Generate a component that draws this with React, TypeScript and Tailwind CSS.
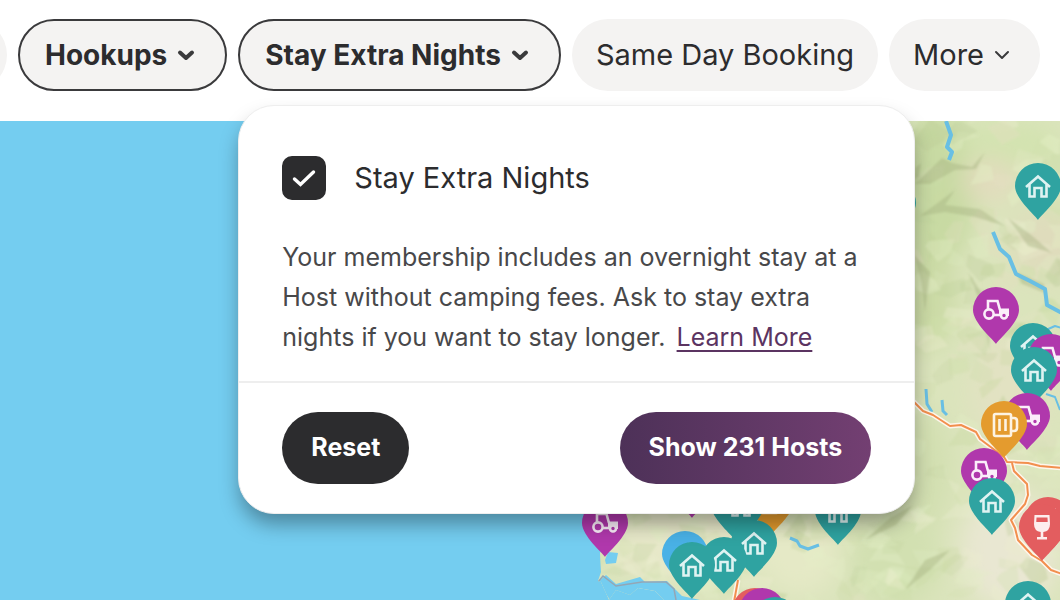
import React, { useState } from "react";

type Glyph = "house" | "tractor" | "beer" | "wine" | "ring";
type Pin = { x: number; y: number; color: string; glyph: Glyph };

const TEAL = "#2fa3a1";
const PURPLE = "#b038ac";
const ORANGE = "#e49b2e";
const RED = "#e35d5f";
const BLUE = "#49b1e6";

const pins: Pin[] = [
  { x: 1038, y: 186, color: TEAL, glyph: "house" },
  { x: 996, y: 310, color: PURPLE, glyph: "tractor" },
  { x: 1033, y: 346, color: TEAL, glyph: "house" },
  { x: 1051, y: 357, color: PURPLE, glyph: "tractor" },
  { x: 1034, y: 370, color: TEAL, glyph: "house" },
  { x: 1027, y: 416, color: PURPLE, glyph: "tractor" },
  { x: 1004, y: 424, color: ORANGE, glyph: "beer" },
  { x: 984, y: 471, color: PURPLE, glyph: "tractor" },
  { x: 992, y: 501, color: TEAL, glyph: "house" },
  { x: 1048, y: 520, color: RED, glyph: "wine" },
  { x: 1042, y: 527, color: RED, glyph: "wine" },
  { x: 1028, y: 604, color: TEAL, glyph: "house" },
  { x: 893, y: 203, color: TEAL, glyph: "house" },
  { x: 598, y: 490, color: TEAL, glyph: "house" },
  { x: 692, y: 484, color: PURPLE, glyph: "tractor" },
  { x: 605, y: 523, color: PURPLE, glyph: "tractor" },
  { x: 771, y: 501, color: ORANGE, glyph: "beer" },
  { x: 734, y: 505, color: TEAL, glyph: "house" },
  { x: 741, y: 505, color: TEAL, glyph: "house" },
  { x: 838, y: 511, color: TEAL, glyph: "house" },
  { x: 754, y: 543, color: TEAL, glyph: "house" },
  { x: 685, y: 554, color: BLUE, glyph: "ring" },
  { x: 724, y: 560, color: TEAL, glyph: "house" },
  { x: 692, y: 565, color: TEAL, glyph: "house" },
  { x: 755, y: 611, color: RED, glyph: "wine" },
  { x: 762, y: 611, color: PURPLE, glyph: "tractor" },
  { x: 775, y: 620, color: TEAL, glyph: "house" },
];

function PinGlyph({ glyph }: { glyph: Glyph }) {
  switch (glyph) {
    case "house":
      return (
        <g fill="none" stroke="#dff3f2" strokeWidth="2.6">
          <path d="M-12 1 L0 -9.500 L12 1" />
          <path d="M-8.500 -1.500 V10.500 H-3.500 V2 H3.500 V10.500 H8.500 V-1.500" />
        </g>
      );
    case "tractor":
      return (
        <g fill="none" stroke="#fbeefa" strokeWidth="2.6">
          <path d="M-8 -1 V-9 H1.500 L4 0" />
          <circle cx="-7" cy="4" r="4.600" />
          <path d="M-2 5 H4" />
          <path d="M3 -1.500 H13 V6 H3 Z" fill="#fbeefa" stroke="none" />
          <circle cx="8" cy="5.500" r="3" fill={PURPLE} />
        </g>
      );
    case "beer":
      return (
        <g fill="none" stroke="#fdf3e2" strokeWidth="2.6">
          <rect x="-10" y="-10" width="17" height="22" rx="1.500" />
          <path d="M7 -6 H10 Q13 -6 13 -3 V4 Q13 7 10 7 H7" />
          <path d="M-4.500 -5 V7 M1.500 -5 V7" />
        </g>
      );
    case "wine":
      return (
        <g fill="#fdeeee">
          <path d="M-7.500 -12 H7.500 L8 -3 Q8 4 1.300 5 V10 H5 V12.500 H-5 V10 H-1.300 V5 Q-8 4 -8 -3 Z" />
          <path d="M-5.500 -9.500 H5.500 L5.700 -5 H-5.700 Z" fill={RED} />
        </g>
      );
    case "ring":
      return <path d="M-11 3 Q-6 -7 4 -10" fill="none" stroke="#eef9ff" strokeWidth="2.500" />;
  }
}

function makeFacets() {
  let seed = 41;
  const rand = () => {
    seed = (seed * 16807) % 2147483647;
    return seed / 2147483647;
  };
  const tones = ["#b9cb93", "#c8d9a1", "#ecedcf", "#cddfa9", "#e4dfc0", "#e3efc6", "#e3efc6"];
  return Array.from({ length: 480 }, () => {
    const x = 580 + rand() * 490;
    const y = 115 + rand() * 495;
    const points = Array.from({ length: 5 }, (_, i) => {
      const angle = (i / 5) * Math.PI * 2 + rand();
      const r = 4 + rand() * 19;
      return `${Math.round(x + Math.cos(angle) * r)},${Math.round(y + Math.sin(angle) * r * 0.75)}`;
    }).join(" ");
    return { points, fill: tones[Math.floor(rand() * tones.length)], opacity: 0.16 + rand() * 0.24 };
  });
}

const facets = makeFacets();

const LAND =
  "M600 121 H2400 V1600 H660 L664 600 L655 591 L638 588 L630 595 L616 590 L609 600 L601 582 L598 581 L601 572 L600 553 L606 545 L609 514 Z";

function MapCanvas() {
  return (
    <svg
      className="absolute inset-0 h-full w-full"
      viewBox="0 121 1060 479"
      preserveAspectRatio="xMinYMin slice"
      role="img"
      aria-label="Map of hosts"
    >
      <defs>
        <clipPath id="land">
          <path d={LAND} />
        </clipPath>
        <filter id="soft" x="-30%" y="-30%" width="160%" height="160%">
          <feGaussianBlur stdDeviation="12" />
        </filter>
        <filter id="relief">
          <feGaussianBlur stdDeviation="0.8" />
        </filter>
      </defs>
      <rect x="0" y="121" width="2400" height="1500" fill="#74cdf0" />
      <g clipPath="url(#land)">
        <rect x="580" y="121" width="1900" height="1500" fill="#dbe4bc" />
        <g filter="url(#soft)">
          <ellipse cx="935" cy="190" rx="40" ry="80" fill="#c8daa3" />
          <ellipse cx="1010" cy="145" rx="50" ry="25" fill="#d3e3b0" />
          <ellipse cx="990" cy="180" rx="28" ry="22" fill="#e2dcbd" />
          <ellipse cx="1045" cy="245" rx="34" ry="36" fill="#dfdcbc" />
          <ellipse cx="925" cy="300" rx="30" ry="50" fill="#cbdaa5" />
          <ellipse cx="1010" cy="390" rx="40" ry="60" fill="#e2e2c2" />
          <ellipse cx="1010" cy="550" rx="50" ry="60" fill="#e9e7d2" />
          <ellipse cx="925" cy="470" rx="25" ry="60" fill="#d2dfb0" />
          <ellipse cx="690" cy="530" rx="80" ry="50" fill="#e7e8c9" />
          <ellipse cx="800" cy="555" rx="40" ry="40" fill="#e5e9c6" />
          <ellipse cx="895" cy="560" rx="45" ry="50" fill="#d2e0b1" />
        </g>
        <g filter="url(#relief)">
          {facets.map((f, i) => (
            <polygon key={i} points={f.points} fill={f.fill} fillOpacity={f.opacity} />
          ))}
          <g fill="#a3b07e" fillOpacity="0.4">
            <path d="M915 184 L942 158 L952 163 L972 167 L985 152 L976 169 L955 170 L930 184 Z" />
            <path d="M915 168 L921 163 L919 176 L915 180 Z" />
            <path d="M920 216 L955 190 L945 205 L980 209 L1005 226 L975 217 L945 212 Z" />
            <path d="M1008 218 L1030 234 L1052 253 L1028 246 Z" />
            <path d="M968 272 L985 298 L990 352 L981 305 Z" />
            <path d="M914 255 L930 272 L925 312 L921 280 Z" />
            <path d="M1016 272 L1044 284 L1045 293 L1022 284 Z" />
            <path d="M865 540 L890 518 L913 505 L896 525 Z" />
            <path d="M905 590 L925 560 L950 550 L930 570 Z" />
          </g>
        </g>
        <path d="M605 560 L608 552 L618 553 L616 563 L606 564 Z" fill="#74cdf0" />
        <path d="M598 582 L606 575 L616 584 L640 577 L645 582 L667 581 L682 596 L700 600 H660 L650 593 L632 595 L626 600 H610 Z" fill="#74cdf0" />
        <path d="M598 582 L603 576 L616 586 L642 582 L666 582 L674 589 L676 600" fill="none" stroke="#94a6b5" strokeWidth="1.500" />
      </g>
      <g fill="none" stroke="#68bfe4" strokeWidth="4" strokeLinejoin="round">
        <path d="M946 121 L951 135 L947 147 L952 152 L949 160" />
        <path d="M993 232 L1000 249 L1009 257 L1016 274 L1030 281 L1045 289 L1047 305 L1062 313" />
        <path d="M926 389 L927 404 L932 412" strokeWidth="3" />
        <path d="M942 400 L943 411 L947 415" strokeWidth="3" />
        <path d="M1046 330 L1055 326 L1062 328 M1046 394 L1055 397 L1060 410" strokeWidth="2" />
        <path d="M790 538 L797 541 L800 546 L808 549 L819 545" strokeWidth="3" />
      </g>
      <g fill="none" strokeLinejoin="round">
        {[
          "M913 401 L923 411 L933 415 L950 426 L961 425 L976 432 L980 439 L1004 457 L1007 462 L1028 463 L1040 466 L1062 468",
          "M1012 463 L1014 471 L1027 484 L1028 495 L1025 504 L1011 520 L1015 528 L1018 540 L1032 555 L1042 561 L1051 570 L1062 574",
          "M738 580 L734 602",
        ].map((d) => (
          <React.Fragment key={d}>
            <path d={d} stroke="#fdf6ec" strokeWidth="5" />
            <path d={d} stroke="#f28f4e" strokeWidth="2" />
          </React.Fragment>
        ))}
      </g>
      {pins.map((pin, i) => (
        <g key={i} transform={`translate(${pin.x} ${pin.y})`}>
          <path d="M0 34 C-2 30 -23 13 -23 0 A23 23 0 0 1 23 0 C23 13 2 30 0 34 Z" fill={pin.color} />
          <PinGlyph glyph={pin.glyph} />
        </g>
      ))}
    </svg>
  );
}

function Chevron({ bold = false }: { bold?: boolean }) {
  return (
    <svg viewBox="0 0 28 28" className="size-7 shrink-0" fill="none" aria-hidden="true">
      <path
        d={bold ? "M8 11.500 L14 17 L20 11.500" : "M8 11 L14 17 L20 11"}
        stroke="#3a3a3c"
        strokeWidth={bold ? 4 : 2}
        strokeLinecap="round"
        strokeLinejoin="round"
      />
    </svg>
  );
}

const pill =
  "flex h-18 shrink-0 items-center whitespace-nowrap rounded-full border-2 bg-[#f4f3f2] text-[#2c2c2e]";
const activePill = `${pill} gap-[5px] border-[#3a3a3c] px-[25px] text-[28px] font-bold`;
const idlePill = `${pill} gap-1 border-transparent px-[22px] text-[29px]`;

export default function App() {
  const [checked, setChecked] = useState(true);

  return (
    <div className="flex min-h-screen flex-col overflow-hidden bg-white font-['Inter',sans-serif] text-[#2c2c2e]">
      <header className="relative z-10 flex gap-[11px] pt-[19px] pb-[30px]">
        <button type="button" aria-label="Previous filter" className="-ml-[65px] h-18 w-18 shrink-0 rounded-full bg-[#f4f3f2]" />
        <button type="button" className={activePill}>
          Hookups
          <Chevron bold />
        </button>
        <div className="relative shrink-0">
          <button type="button" aria-expanded="true" className={activePill}>
            Stay Extra Nights
            <Chevron bold />
          </button>
          <section className="absolute top-[86px] left-0 w-[677px] rounded-[36px] border border-[#eeeeee] bg-white shadow-[0_12px_20px_-2px_rgba(0,0,0,0.35)]">
            <div className="px-[43px] pt-[50px] pb-6">
              <label className="flex items-center gap-7 text-[29px] leading-11">
                <span className="relative size-11 shrink-0">
                  <input
                    type="checkbox"
                    checked={checked}
                    onChange={(e) => setChecked(e.target.checked)}
                    className="block size-11 appearance-none rounded-[10px] border-2 border-[#2c2c2e] checked:bg-[#2c2c2e]"
                  />
                  <svg viewBox="0 0 44 44" className="pointer-events-none absolute inset-0" fill="none" aria-hidden="true">
                    <path d="M12.500 23 L18.500 28.500 L31.500 16" stroke="#ffffff" strokeWidth="3.4" strokeLinecap="round" />
                  </svg>
                </span>
                Stay Extra Nights
              </label>
              <p className="mt-[37px] text-[25px] leading-10 text-[#48484a]">
                Your membership includes an overnight stay at a Host without camping fees. Ask to stay extra nights if you want to stay longer.{" "}
                <a href="#learn" className="ml-1 text-[#5b3461] underline decoration-2 underline-offset-4">
                  Learn More
                </a>
              </p>
            </div>
            <div className="flex items-center justify-between border-t-2 border-[#eeeeee] px-[43px] py-[29px]">
              <button type="button" className="h-18 rounded-full bg-[#2c2c2e] px-[29px] text-[25px] font-bold text-white">
                Reset
              </button>
              <button type="button" className="h-18 rounded-full bg-linear-to-r from-[#4d3158] to-[#733f72] px-[29px] text-[25px] font-bold text-white">
                Show 231 Hosts
              </button>
            </div>
          </section>
        </div>
        <button type="button" className={idlePill}>Same Day Booking</button>
        <button type="button" className={idlePill}>
          More
          <Chevron />
        </button>
      </header>
      <main className="relative grow overflow-hidden">
        <MapCanvas />
      </main>
    </div>
  );
}
